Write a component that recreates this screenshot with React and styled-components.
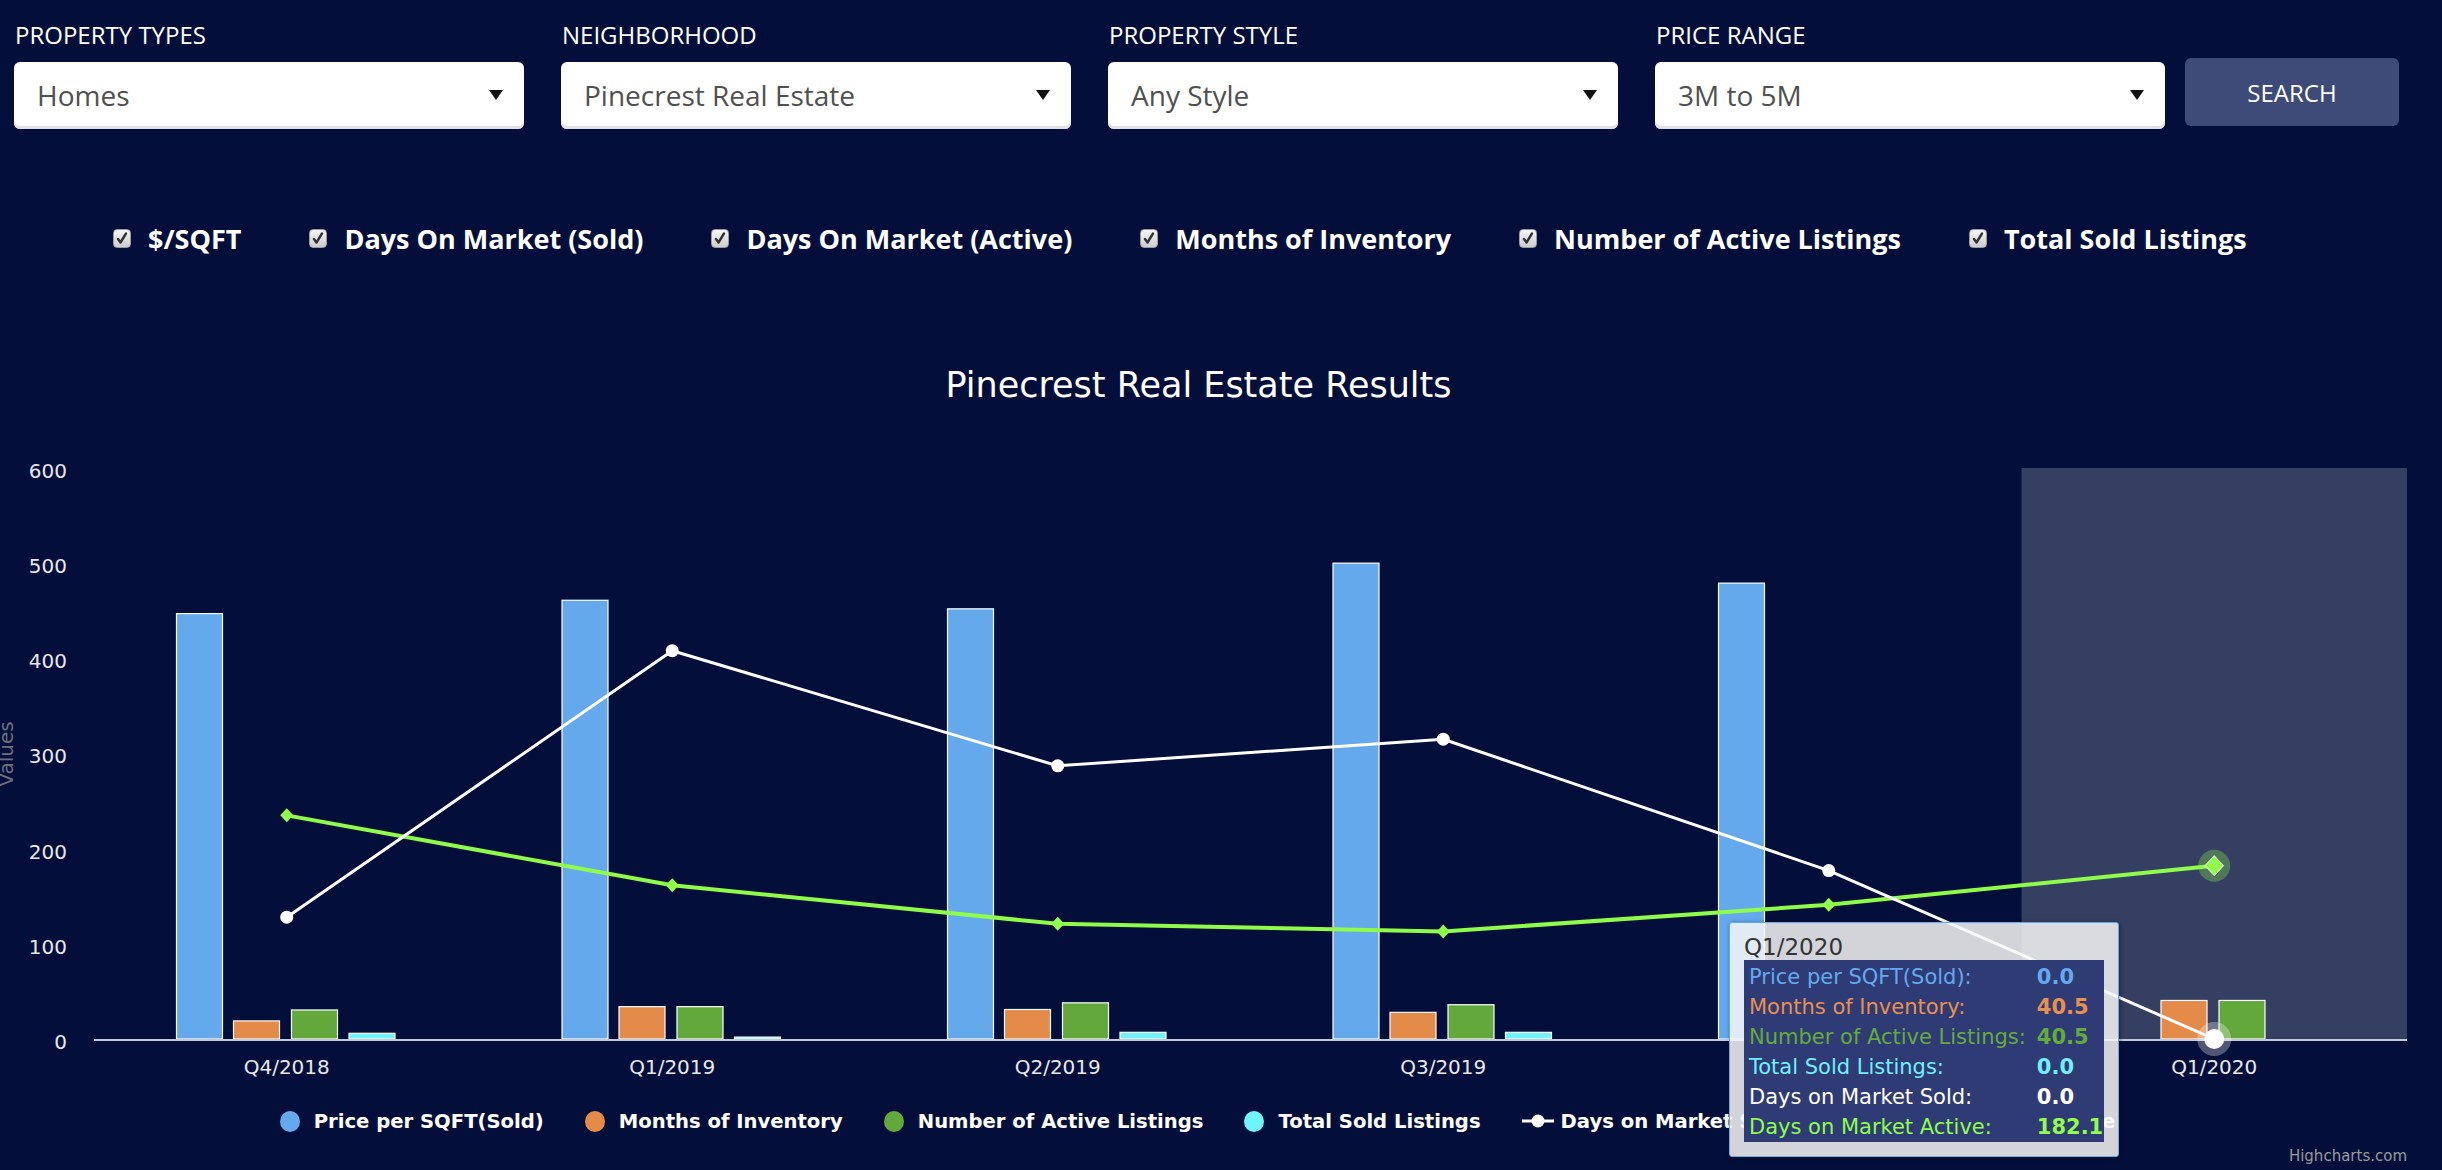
import React from "react";
import styled, { createGlobalStyle } from "styled-components";

const GlobalStyle = createGlobalStyle`
  html, body {
    margin: 0;
    padding: 0;
    background: #030f3a;
  }
  body {
    font-family: "Open Sans", "Noto Sans", sans-serif;
    color: #fff;
    overflow: hidden;
  }
`;

const Page = styled.div`
  position: relative;
  width: 2442px;
  height: 1170px;
  overflow: hidden;
`;

const Filters = styled.div`
  display: flex;
  align-items: flex-end;
  gap: 37px;
  padding: 20px 0 0 14px;
`;

const Field = styled.div`
  display: flex;
  flex-direction: column;
  width: 510px;
`;

const FieldLabel = styled.label`
  font-size: 24px;
  line-height: 30px;
  color: #fff;
  margin: 0 0 12px 1px;
`;

const Select = styled.div`
  height: 67px;
  box-sizing: border-box;
  background: #fff;
  border-radius: 6px;
  box-shadow: inset 0 -3px 0 #e2e2e4;
  display: flex;
  align-items: center;
  justify-content: space-between;
  padding: 0 21px 2px 23px;
  font-size: 28px;
  color: #505050;
`;

const SearchButton = styled.button`
  width: 214px;
  height: 68px;
  margin: 0 0 3px -17px;
  border: none;
  border-radius: 6px;
  background: #3e4a78;
  color: #fff;
  font-family: "Open Sans", sans-serif;
  font-size: 24px;
  cursor: pointer;
`;

const Checks = styled.div`
  display: flex;
  align-items: center;
  gap: 68px;
  height: 36px;
  margin-top: 91px;
  padding-left: 113px;
`;

const CheckItem = styled.label`
  display: flex;
  align-items: center;
  gap: 17px;
  font-size: 27px;
  font-weight: 700;
  white-space: nowrap;
`;

const CheckBox = styled.span`
  width: 18px;
  height: 19px;
  box-sizing: border-box;
  border-radius: 4px;
  border: 1px solid #9a9a9a;
  background: linear-gradient(#f6f6f6, #cdcdcd);
  display: inline-flex;
  align-items: center;
  justify-content: center;
`;

const ChartWrap = styled.div`
  width: 2417px;
  font-family: "DejaVu Sans", "Liberation Sans", sans-serif;
`;

const ChartTitle = styled.h2`
  margin: 107px 0 0;
  padding-right: 20px;
  text-align: center;
  font-size: 35px;
  line-height: 44px;
  font-weight: 400;
  color: #fff;
`;

const ChartSvg = styled.svg`
  display: block;
  margin-top: 13px;
`;

const Legend = styled.div`
  display: flex;
  justify-content: center;
  align-items: center;
  gap: 41px;
  height: 28px;
  margin-top: 17px;
  padding-right: 22px;
`;

const LegendItem = styled.div`
  display: flex;
  align-items: center;
  gap: ${(p) => p.$gap}px;
  font-size: 19.6px;
  font-weight: 700;
  color: #fff;
  white-space: nowrap;
`;

const Credits = styled.div`
  margin-top: 11px;
  padding-right: 10px;
  text-align: right;
  font-size: 15px;
  line-height: 20px;
  color: #999;
`;

const Tooltip = styled.div`
  position: absolute;
  left: 1729px;
  top: 922px;
  width: 390px;
  height: 235px;
  box-sizing: border-box;
  padding: 11px 14px 0;
  background: rgba(247, 247, 247, 0.85);
  border: 1px solid #64a9ec;
  border-radius: 3px;
  box-shadow: 1px 1px 4px rgba(0, 0, 0, 0.45);
  font-family: "DejaVu Sans", "Liberation Sans", sans-serif;
`;

const TooltipHeader = styled.div`
  font-size: 23px;
  line-height: 26px;
  color: #333;
`;

const TooltipTable = styled.div`
  width: 360px;
  box-sizing: border-box;
  padding: 2px 7px 0 5px;
  height: 182px;
  background: #2e3b74;
  display: grid;
  grid-template-columns: auto 1fr;
  column-gap: 11px;
  font-size: 21px;
  line-height: 30px;
`;

const TipCell = styled.span`
  color: ${(p) => p.$color};
  font-weight: ${(p) => (p.$bold ? 700 : 400)};
  white-space: nowrap;
`;

const filters = [
  { label: "PROPERTY TYPES", value: "Homes" },
  { label: "NEIGHBORHOOD", value: "Pinecrest Real Estate" },
  { label: "PROPERTY STYLE", value: "Any Style" },
  { label: "PRICE RANGE", value: "3M to 5M" },
];

const checks = [
  "$/SQFT",
  "Days On Market (Sold)",
  "Days On Market (Active)",
  "Months of Inventory",
  "Number of Active Listings",
  "Total Sold Listings",
];

const cats = ["Q4/2018", "Q1/2019", "Q2/2019", "Q3/2019", "Q4/2019", "Q1/2020"];

const columns = [
  { name: "Price per SQFT(Sold)", color: "#63a9ec", data: [447, 461, 452, 500, 479, 0] },
  { name: "Months of Inventory", color: "#e58b4a", data: [19, 34, 31, 28, 38, 40.5] },
  { name: "Number of Active Listings", color: "#62a83b", data: [30.5, 34, 38, 36, 40, 40.5] },
  { name: "Total Sold Listings", color: "#70f2ff", data: [6, 2, 7, 7, 5, 0] },
];

const daysSold = [128, 408, 287, 315, 177, 0];
const daysActive = [235, 161.5, 121, 113, 141, 182.1];

const PLOT_LEFT = 94;
const PLOT_RIGHT = 2407;
const CAT_W = (PLOT_RIGHT - PLOT_LEFT) / 6;
const BASE_Y = 619;
const UNIT = 0.9517;
const BAR_OFFSETS = [82, 139, 197, 254.5];
const BAR_W = 47;

const yPx = (v) => BASE_Y - v * UNIT;
const xCenter = (i) => PLOT_LEFT + CAT_W * i + CAT_W / 2;

const diamond = (x, y, r) =>
  `M ${x} ${y - r} L ${x + r * 0.93} ${y} L ${x} ${y + r} L ${x - r * 0.93} ${y} Z`;

const tipRows = [
  { label: "Price per SQFT(Sold):", value: "0.0", color: "#64a9ef" },
  { label: "Months of Inventory:", value: "40.5", color: "#e8904e" },
  { label: "Number of Active Listings:", value: "40.5", color: "#64ab3c" },
  { label: "Total Sold Listings:", value: "0.0", color: "#72f0ff" },
  { label: "Days on Market Sold:", value: "0.0", color: "#ffffff" },
  { label: "Days on Market Active:", value: "182.1", color: "#90fc4c" },
];

function Arrow() {
  return (
    <svg width="14" height="10" viewBox="0 0 14 10">
      <path d="M0 0 L14 0 L7 10 Z" fill="#111" />
    </svg>
  );
}

function Tick() {
  return (
    <svg width="12" height="13" viewBox="0 0 12 13">
      <path
        d="M2 7 L4.5 10.5 L10 1.5"
        fill="none"
        stroke="#333"
        strokeWidth="2.4"
        strokeLinecap="round"
        strokeLinejoin="round"
      />
    </svg>
  );
}

function Chart() {
  const soldPts = daysSold.map((v, i) => `${xCenter(i)},${yPx(v)}`).join(" ");
  const activePts = daysActive.map((v, i) => `${xCenter(i)},${yPx(v)}`).join(" ");
  const last = cats.length - 1;

  return (
    <ChartSvg width="2417" height="670" viewBox="0 0 2417 670">
      <text
        transform="translate(13 334) rotate(-90)"
        textAnchor="middle"
        fontSize="20"
        fill="#6c6f7d"
      >
        Values
      </text>
      {[0, 100, 200, 300, 400, 500, 600].map((v) => (
        <text key={v} x="67" y={yPx(v) + 10} textAnchor="end" fontSize="20" fill="#e8e8ec">
          {v}
        </text>
      ))}

      <rect
        x={PLOT_LEFT + CAT_W * 5}
        y={yPx(600)}
        width={CAT_W}
        height={600 * UNIT}
        fill="rgba(255,255,255,0.2)"
      />

      {columns.map((s, si) =>
        s.data.map((v, i) =>
          v > 0 ? (
            <rect
              key={`${si}-${i}`}
              x={PLOT_LEFT + CAT_W * i + BAR_OFFSETS[si] + 0.5}
              y={yPx(v)}
              width={BAR_W - 1}
              height={v * UNIT}
              fill={s.color}
              stroke="#fff"
              strokeWidth="1.2"
            />
          ) : null
        )
      )}

      <line x1={PLOT_LEFT} y1={BASE_Y + 1} x2={PLOT_RIGHT} y2={BASE_Y + 1} stroke="#c3c9d6" strokeWidth="2" />

      {cats.map((c, i) => (
        <text key={c} x={xCenter(i)} y="654" textAnchor="middle" fontSize="20" fill="#e8e8ec">
          {c}
        </text>
      ))}

      <polyline points={activePts} fill="none" stroke="#8ffb4b" strokeWidth="4" strokeLinejoin="round" />
      {daysActive.slice(0, last).map((v, i) => (
        <path key={i} d={diamond(xCenter(i), yPx(v), 7)} fill="#8ffb4b" />
      ))}

      <polyline points={soldPts} fill="none" stroke="#fff" strokeWidth="3" strokeLinejoin="round" />
      {daysSold.slice(0, last).map((v, i) => (
        <circle key={i} cx={xCenter(i)} cy={yPx(v)} r="6.5" fill="#fff" />
      ))}

      <circle cx={xCenter(last)} cy={yPx(daysActive[last])} r="16" fill="rgba(143,251,75,0.3)" />
      <path d={diamond(xCenter(last), yPx(daysActive[last]), 10)} fill="#8ffb4b" stroke="#fff" strokeWidth="1" />
      <circle cx={xCenter(last)} cy={yPx(0)} r="17" fill="rgba(255,255,255,0.3)" />
      <circle cx={xCenter(last)} cy={yPx(0)} r="10" fill="#fff" />
    </ChartSvg>
  );
}

const App = () => {
  return (
    <Page>
      <GlobalStyle />
      <Filters>
        {filters.map((f) => (
          <Field key={f.label}>
            <FieldLabel>{f.label}</FieldLabel>
            <Select>
              <span>{f.value}</span>
              <Arrow />
            </Select>
          </Field>
        ))}
        <SearchButton>SEARCH</SearchButton>
      </Filters>

      <Checks>
        {checks.map((c) => (
          <CheckItem key={c}>
            <CheckBox>
              <Tick />
            </CheckBox>
            {c}
          </CheckItem>
        ))}
      </Checks>

      <ChartWrap>
        <ChartTitle>Pinecrest Real Estate Results</ChartTitle>
        <Chart />
        <Legend>
          {columns.map((s) => (
            <LegendItem key={s.name} $gap={14}>
              <svg width="20" height="21" viewBox="0 0 20 21">
                <ellipse cx="10" cy="10.5" rx="10" ry="10.5" fill={s.color} />
              </svg>
              {s.name}
            </LegendItem>
          ))}
          <LegendItem $gap={7}>
            <svg width="32" height="16" viewBox="0 0 32 16">
              <line x1="0" y1="8" x2="32" y2="8" stroke="#fff" strokeWidth="3" />
              <circle cx="16" cy="8" r="6.5" fill="#fff" />
            </svg>
            Days on Market Sold
          </LegendItem>
          <LegendItem $gap={7}>
            <svg width="32" height="16" viewBox="0 0 32 16">
              <line x1="0" y1="8" x2="32" y2="8" stroke="#8ffb4b" strokeWidth="4" />
              <path d={diamond(16, 8, 7)} fill="#8ffb4b" />
            </svg>
            Days on Market Active
          </LegendItem>
        </Legend>
        <Credits>Highcharts.com</Credits>
      </ChartWrap>

      <Tooltip>
        <TooltipHeader>Q1/2020</TooltipHeader>
        <TooltipTable>
          {tipRows.map((r) => (
            <React.Fragment key={r.label}>
              <TipCell $color={r.color}>{r.label}</TipCell>
              <TipCell $color={r.color} $bold>
                {r.value}
              </TipCell>
            </React.Fragment>
          ))}
        </TooltipTable>
      </Tooltip>
    </Page>
  );
};

export default App;
